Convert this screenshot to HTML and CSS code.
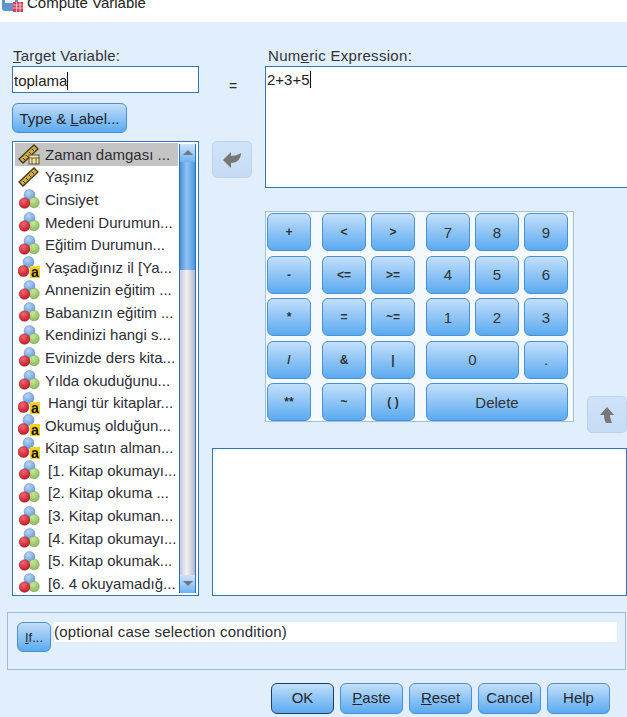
FILE: index.html
```html
<!DOCTYPE html>
<html lang="en">
<head>
<meta charset="utf-8">
<title>Compute Variable</title>
<link rel="stylesheet" href="styles.css">
</head>
<body>
<svg class="defs" width="0" height="0" aria-hidden="true">
  <defs>
    <radialGradient id="gb" cx=".4" cy=".3" r=".8"><stop offset="0" stop-color="#b5d6f7"/><stop offset="1" stop-color="#5c93d6"/></radialGradient>
    <radialGradient id="gr" cx=".4" cy=".3" r=".8"><stop offset="0" stop-color="#f2656d"/><stop offset="1" stop-color="#c20f22"/></radialGradient>
    <radialGradient id="gg" cx=".4" cy=".3" r=".8"><stop offset="0" stop-color="#cbe79a"/><stop offset="1" stop-color="#7fb650"/></radialGradient>
    <symbol id="balls" viewBox="0 0 22 22">
      <circle cx="11.500" cy="7" r="5.500" fill="url(#gb)" stroke="#6f8fb0" stroke-width=".5"/>
      <circle cx="16" cy="14.500" r="5.300" fill="url(#gg)" stroke="#7d9a60" stroke-width=".5"/>
      <circle cx="6.500" cy="15" r="5.300" fill="url(#gr)" stroke="#8d2a30" stroke-width=".5"/>
    </symbol>
    <symbol id="nominal" viewBox="0 0 22 22">
      <circle cx="10.500" cy="6" r="5.500" fill="url(#gb)" stroke="#6f8fb0" stroke-width=".5"/>
      <circle cx="5.500" cy="15" r="5.500" fill="url(#gr)" stroke="#8d2a30" stroke-width=".5"/>
      <rect x="12" y="10" width="10" height="12" fill="#f7cf1c"/>
      <text x="17" y="20.500" class="badge">a</text>
    </symbol>
    <symbol id="ruler" viewBox="0 0 22 22">
      <path d="M1 16 16 2l4 4L5 20z" fill="#d2ad3e" stroke="#3f3a22" stroke-width="1.300"/>
      <path d="M5 15l2 2M8 12l2 2M11 9l2 2M14 6l2 2" stroke="#3f3a22" stroke-width="1"/>
    </symbol>
    <symbol id="rulerdate" viewBox="0 0 22 22">
      <path d="M1 16 16 2l4 4L5 20z" fill="#d2ad3e" stroke="#3f3a22" stroke-width="1.300"/>
      <path d="M5 15l2 2M8 12l2 2M11 9l2 2M14 6l2 2" stroke="#3f3a22" stroke-width="1"/>
      <rect x="11" y="12" width="10" height="9" fill="#f3e3a6" stroke="#5a5230"/>
      <path d="M11 15h10M14 15v6M18 15v6" stroke="#5a5230" stroke-width=".9"/>
    </symbol>
  </defs>
</svg>

<header class="titlebar">
  <svg class="appicon" viewBox="0 0 22 14" width="22" height="14" aria-hidden="true">
    <rect x="0" y="0" width="16" height="13" rx="3" fill="#5f93cc"/>
    <rect x="3" y="0" width="10" height="5" fill="#eef4fa"/>
    <rect x="11" y="4" width="10" height="10" fill="#d43f55"/>
    <path d="M11 7h10M11 10h10M14.500 4v10M18 4v10" stroke="#f6d5da" stroke-width=".8"/>
  </svg>
  <span class="title">Compute Variable</span>
</header>

<main class="dialog">
  <div class="top">
    <section class="left">
      <label class="label"><u>T</u>arget Variable:</label>
      <div class="field target"><span>toplama</span><i class="caret"></i></div>
      <button class="btn typelabel">Type &amp; <u>L</u>abel...</button>
      <div class="list">
        <ul class="items">
          <li class="sel"><svg><use href="#rulerdate"/></svg><span>Zaman damgası ...</span></li>
          <li><svg><use href="#ruler"/></svg><span>Yaşınız</span></li>
          <li><svg><use href="#balls"/></svg><span>Cinsiyet</span></li>
          <li><svg><use href="#balls"/></svg><span>Medeni Durumun...</span></li>
          <li><svg><use href="#balls"/></svg><span>Eğitim Durumun...</span></li>
          <li><svg><use href="#nominal"/></svg><span>Yaşadığınız il [Ya...</span></li>
          <li><svg><use href="#balls"/></svg><span>Annenizin eğitim ...</span></li>
          <li><svg><use href="#balls"/></svg><span>Babanızın eğitim ...</span></li>
          <li><svg><use href="#balls"/></svg><span>Kendinizi hangi s...</span></li>
          <li><svg><use href="#balls"/></svg><span>Evinizde ders kita...</span></li>
          <li><svg><use href="#balls"/></svg><span>Yılda okuduğunu...</span></li>
          <li><svg><use href="#nominal"/></svg><span class="ind">Hangi tür kitaplar...</span></li>
          <li><svg><use href="#nominal"/></svg><span>Okumuş olduğun...</span></li>
          <li><svg><use href="#nominal"/></svg><span>Kitap satın alman...</span></li>
          <li><svg><use href="#balls"/></svg><span class="ind">[1. Kitap okumayı...</span></li>
          <li><svg><use href="#balls"/></svg><span class="ind">[2. Kitap okuma ...</span></li>
          <li><svg><use href="#balls"/></svg><span class="ind">[3. Kitap okuman...</span></li>
          <li><svg><use href="#balls"/></svg><span class="ind">[4. Kitap okumayı...</span></li>
          <li><svg><use href="#balls"/></svg><span class="ind">[5. Kitap okumak...</span></li>
          <li><svg><use href="#balls"/></svg><span class="ind">[6. 4 okuyamadığ...</span></li>
        </ul>
        <div class="scrollbar">
          <div class="sb-end sb-up"></div>
          <div class="sb-thumb"></div>
          <div class="sb-track"></div>
          <div class="sb-end sb-down"></div>
        </div>
      </div>
    </section>

    <section class="right">
      <div class="expr-row">
        <div class="mid">
          <span class="equals">=</span>
          <button class="move" aria-label="Move to expression">
            <svg viewBox="0 0 20 16" width="20" height="16"><path d="M1 8 9 0V4C12 4 16 3 19 1 19 7 15 11 9 11V16z" fill="#777"/></svg>
          </button>
        </div>
        <div class="expr-col">
          <label class="label">Num<u>e</u>ric Expression:</label>
          <div class="field expr"><span>2+3+5</span><i class="caret"></i></div>
        </div>
      </div>

      <div class="pad-row">
        <div class="keypad">
          <div class="group g1">
            <button class="btn key">+</button>
            <button class="btn key">-</button>
            <button class="btn key">*</button>
            <button class="btn key">/</button>
            <button class="btn key">**</button>
          </div>
          <div class="group g2">
            <button class="btn key">&lt;</button><button class="btn key">&gt;</button>
            <button class="btn key">&lt;=</button><button class="btn key">&gt;=</button>
            <button class="btn key">=</button><button class="btn key">~=</button>
            <button class="btn key">&amp;</button><button class="btn key">|</button>
            <button class="btn key">~</button><button class="btn key">( )</button>
          </div>
          <div class="group g3">
            <button class="btn key num">7</button><button class="btn key num">8</button><button class="btn key num">9</button>
            <button class="btn key num">4</button><button class="btn key num">5</button><button class="btn key num">6</button>
            <button class="btn key num">1</button><button class="btn key num">2</button><button class="btn key num">3</button>
            <button class="btn key num span2">0</button><button class="btn key num">.</button>
            <button class="btn key num span3">Delete</button>
          </div>
        </div>
        <button class="move up" aria-label="Move up">
          <svg viewBox="0 0 14 16" width="14" height="16"><path d="M7 0 14 8H10C10 11 11 13 12 16H6C4.500 13 4 11 4 8H0z" fill="#777"/></svg>
        </button>
      </div>

      <div class="funcbox"></div>
    </section>
  </div>

  <section class="ifpanel">
    <button class="btn ifbtn"><u>I</u>f...</button>
    <div class="cond">(optional case selection condition)</div>
  </section>

  <footer class="actions">
    <button class="btn act ok">OK</button>
    <button class="btn act"><u>P</u>aste</button>
    <button class="btn act"><u>R</u>eset</button>
    <button class="btn act">Cancel</button>
    <button class="btn act">Help</button>
  </footer>
</main>
</body>
</html>
```
FILE: styles.css
```css
* { box-sizing: border-box; }
html, body { margin: 0; padding: 0; }
body {
  width: 627px;
  height: 717px;
  overflow: hidden;
  background: #e1eefb;
  font-family: "Liberation Sans", Arial, sans-serif;
  font-size: 15px;
  color: #2b2b30;
}
.defs { position: absolute; }
.badge { font: bold 14px "Liberation Sans", sans-serif; fill: #111; text-anchor: middle; }
.titlebar {
  height: 22px;
  background: #fff;
  display: flex;
  align-items: flex-start;
  overflow: hidden;
  padding-left: 2px;
  gap: 3px;
}
.appicon { margin-top: -2px; flex: none; }
.title { font-size: 15px; line-height: 16px; margin-top: -5px; color: #222; }

.top { display: flex; padding: 0 0 0 12px; height: 574px; }
.left { width: 187px; flex: none; padding-top: 25px; }
.label { display: block; height: 19px; line-height: 18px; padding-left: 1px; font-size: 15px; letter-spacing: .2px; color: #33333a; }
.field {
  background: #fff;
  border: 1px solid #2f78c0;
  display: flex;
  align-items: flex-start;
  font-size: 15px;
  color: #222;
}
.caret { display: block; width: 1px; background: #111; }
.target { height: 27px; padding: 5px 0 0 1px; }
.target .caret { height: 18px; }
.btn {
  font-family: inherit;
  color: #26262c;
  border: 1.500px solid #4a90d2;
  border-radius: 6px;
  background: linear-gradient(#c3dffb, #5aaaf0);
  padding: 0;
  cursor: default;
}
.typelabel { display: block; width: 115px; height: 30px; margin-top: 10px; font-size: 15px; }
.list {
  margin-top: 8px;
  width: 187px;
  height: 455px;
  border: 1.500px solid #2f78c0;
  background: #fff;
  display: flex;
  padding: 1px 2px 2px;
}
.items { list-style: none; margin: 0; padding: 0; width: 163px; flex: none; }
.items li {
  height: 22.580px;
  display: flex;
  align-items: center;
  padding-left: 3px;
  white-space: nowrap;
  font-size: 15px;
  color: #2e2e36;
}
.items li.sel { background: #c4c4c4; }
.items svg { width: 22px; height: 22px; flex: none; margin-right: 5px; }
.ind { margin-left: 3px; }
.scrollbar { width: 18px; margin: 1px 0 0 1px; display: flex; flex-direction: column; border: 1px solid #2f6fb5; border-width: 0 1px 0 1px; }
.sb-end {
  height: 18px;
  flex: none;
  background: linear-gradient(#cfe4fa, #6eb3f2);
  position: relative;
}
.sb-end::after {
  content: "";
  position: absolute;
  left: 3px;
  top: 6px;
  border: 5px solid transparent;
  border-top-width: 0;
  border-bottom: 5px solid #6b7784;
}
.sb-down::after { transform: rotate(180deg); }
.sb-thumb { height: 108px; flex: none; background: linear-gradient(90deg, #4f8fd4, #8fc4f6 45%, #4f94dc); }
.sb-track { flex: 1; background: linear-gradient(90deg, #c9c9d6, #f1f1f6 45%, #b8b8c6); }

.right { flex: 1; display: flex; flex-direction: column; padding-left: 13px; min-width: 0; padding-top: 25px; }
.expr-row { display: flex; height: 164px; }
.mid { width: 53px; flex: none; display: flex; flex-direction: column; }
.equals { margin-top: 29px; padding-left: 17px; height: 20px; line-height: 20px; font-size: 14px; }
.move {
  width: 40px;
  height: 37px;
  margin-top: 45px;
  padding: 0;
  display: flex;
  align-items: center;
  justify-content: center;
  background: linear-gradient(#cfe3f8, #c6dcf5);
  border: 1px solid #b9d4ef;
  border-radius: 5px;
}
.expr-col { flex: 1; min-width: 0; display: flex; flex-direction: column; }
.expr-col .label { padding-left: 3px; letter-spacing: .3px; }
.expr { width: 363px; height: 122px; padding: 4px 0 0 1px; }
.expr .caret { height: 17px; }

.pad-row { display: flex; align-items: flex-end; margin-left: 53px; height: 222px; }
.keypad {
  width: 309px;
  height: 211px;
  background: #f4f9fe;
  border: 1px solid #a4bfda;
  padding: 1px 0 0 1px;
  display: flex;
  gap: 11px;
  margin-bottom: 11px;
}
.group { display: grid; grid-template-rows: repeat(5, 38px); row-gap: 4.500px; column-gap: 5px; }
.g1 { grid-template-columns: 44px; }
.g2 { grid-template-columns: 44px 44px; }
.g3 { grid-template-columns: 44px 44px 44px; }
.key { font-size: 12px; font-weight: bold; color: #333; }
.num { font-size: 15px; font-weight: normal; }
.span2 { grid-column: span 2; }
.span3 { grid-column: span 3; }
.move.up { margin: 0 0 0 13px; flex: none; }

.funcbox { margin-top: 15px; height: 148px; background: #fff; border: 1px solid #2f78c0; width: 415px; }

.ifpanel {
  margin: 16px 0 0 7px;
  width: 619px;
  height: 58px;
  border: 1px solid #9dbbd8;
  padding: 9px 8px 0 9px;
  display: flex;
  align-items: flex-start;
  gap: 3px;
}
.ifbtn { width: 34px; height: 30px; font-size: 13px; flex: none; }
.cond { flex: 1; height: 20px; background: #fff; line-height: 20px; font-size: 15px; letter-spacing: .2px; }

.actions { display: flex; gap: 6px; padding: 13px 0 0 271px; }
.act { width: 63px; height: 31px; font-size: 15px; padding-bottom: 2px; }
.ok { border-color: #1d3f66; }
```
